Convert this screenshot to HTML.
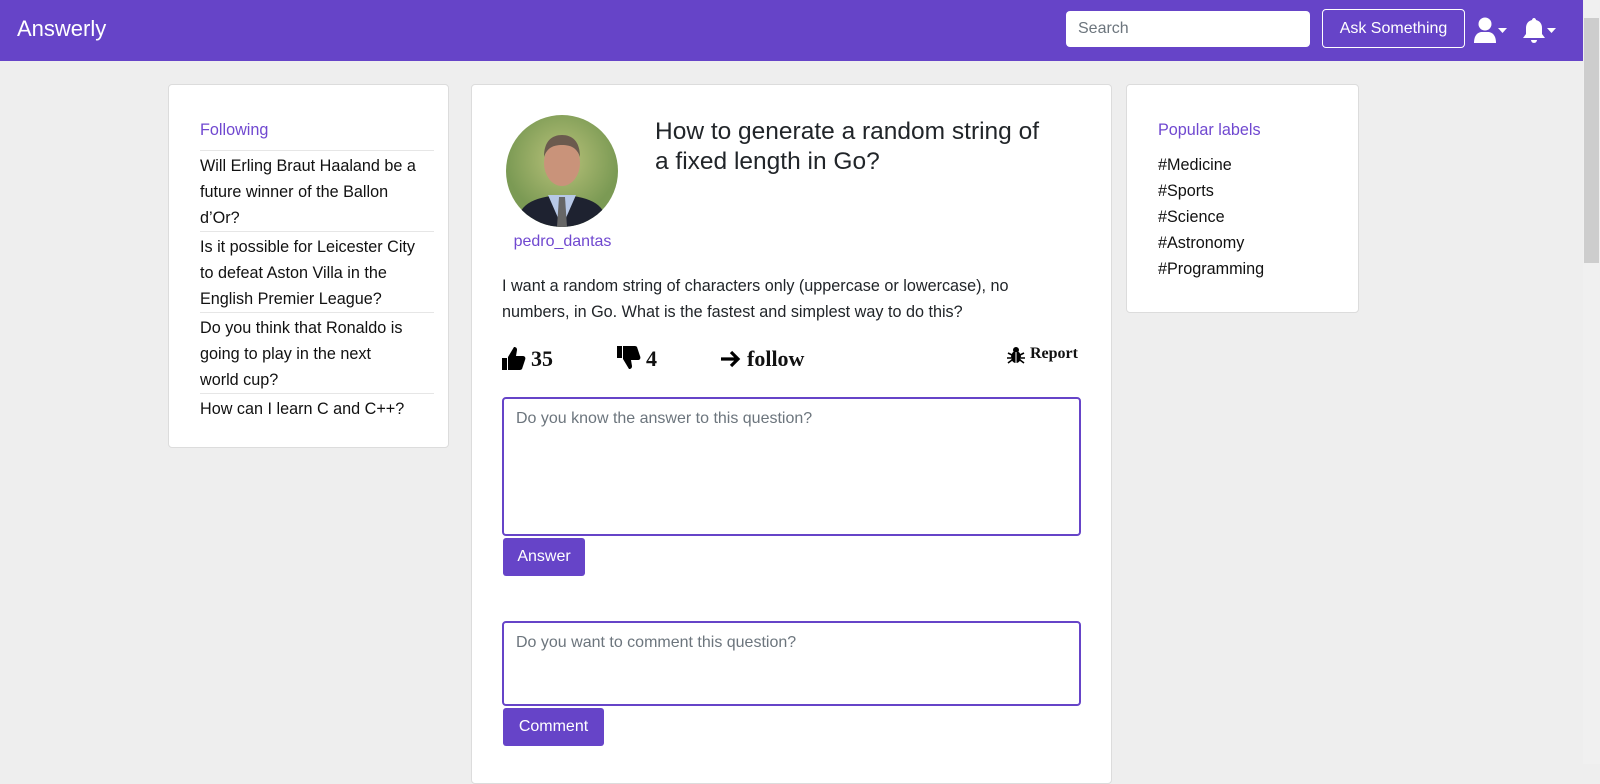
<!DOCTYPE html>
<html><head><meta charset="utf-8"><style>
*{box-sizing:border-box;margin:0;padding:0}
html,body{width:1600px;height:764px;overflow:hidden;background:#eeeeee;font-family:"Liberation Sans",sans-serif;color:#111}
.abs{position:absolute}
.nav{position:absolute;left:0;top:0;width:1583px;height:61px;background:#6644c8}
.brand{left:17px;top:16px;color:#fff;font-size:22px}
.search{left:1066px;top:11px;width:244px;height:36px;background:#fff;border-radius:4px;color:#6c757d;font-size:16px;padding:9px 12px}
.ask{left:1322px;top:9px;width:143px;height:39px;border:1px solid #fff;border-radius:4px;color:#fff;font-size:16px;text-align:center;line-height:37px}
.sb{left:1583px;top:0;width:17px;height:764px;background:#f0f0f0}
.thumb{left:1584px;top:18px;width:15px;height:245px;background:#cdcdcd}
.card{position:absolute;background:#fff;border:1px solid #dcdcdc;border-radius:4px}
.purple{color:#7048d0}
.f16{font-size:16.2px;line-height:26px}
.item{border-top:1px solid #e6e6e6;padding-top:2px;padding-right:6px}
.ta{position:absolute;left:502px;width:579px;border:2px solid #6644c8;border-radius:4px;background:#fff;color:#6c757d;font-size:16px;padding:11px 12px}
.btn{position:absolute;left:503px;background:#6644c8;color:#fff;font-size:16px;border-radius:3px;text-align:center;line-height:38px;height:38px}
.act{font-family:"Liberation Serif",serif;font-weight:bold;font-size:22px}
</style></head><body>
<div class="nav"></div>
<div class="abs brand">Answerly</div>
<div class="abs search">Search</div>
<div class="abs ask">Ask Something</div>
<svg class="abs" style="left:1474px;top:17px" width="34" height="28" viewBox="0 0 34 28"><circle cx="11" cy="7" r="6.5" fill="#fff"/><path d="M0 26c0-8 4-11 8-11h6c4 0 8 3 8 11z" fill="#fff"/><path d="M24 11h9l-4.5 5z" fill="#fff"/></svg>
<svg class="abs" style="left:1523px;top:17px" width="34" height="28" viewBox="0 0 34 28"><path d="M11 1c1 0 2 1 2 2 4 1 6 4 6 8v6l3 4H0l3-4v-6c0-4 2-7 6-8 0-1 1-2 2-2z" fill="#fff"/><path d="M8 23h6a3 3 0 0 1-6 0z" fill="#fff"/><path d="M24 11h9l-4.5 5z" fill="#fff"/></svg>
<div class="abs sb"></div><div class="abs thumb"></div>

<div class="card" style="left:168px;top:84px;width:281px;height:364px"></div>
<div class="abs f16" style="left:200px;top:117px;width:234px">
<div class="purple" style="height:33px">Following</div>
<div class="item">Will Erling Braut Haaland be a future winner of the Ballon d’Or?</div>
<div class="item">Is it possible for Leicester City to defeat Aston Villa in the English Premier League?</div>
<div class="item">Do you think that Ronaldo is going to play in the next<br>world cup?</div>
<div class="item">How can I learn C and C++?</div>
</div>

<div class="card" style="left:471px;top:84px;width:641px;height:700px"></div>
<svg class="abs" style="left:506px;top:115px" width="112" height="112" viewBox="0 0 112 112">
<defs><clipPath id="c"><circle cx="56" cy="56" r="56"/></clipPath><radialGradient id="g" cx="50%" cy="40%"><stop offset="0" stop-color="#b9c27a"/><stop offset="1" stop-color="#7b9a54"/></radialGradient></defs>
<g clip-path="url(#c)"><rect width="112" height="112" fill="url(#g)"/>
<path d="M10 112c2-22 15-30 46-32 31 2 44 10 46 32z" fill="#1e2230"/>
<path d="M42 80l14 32 14-32z" fill="#b7c8e6"/><path d="M53 82h6l2 30h-10z" fill="#666"/>
<ellipse cx="56" cy="48" rx="18" ry="23" fill="#c9937a"/><path d="M38 42c0-16 8-22 18-22s18 6 18 22c-3-9-9-12-18-12s-15 3-18 12z" fill="#6b5a4e"/></g></svg>
<div class="abs purple" style="left:500px;top:229px;width:125px;text-align:center;font-size:16px;line-height:26px">pedro_dantas</div>
<div class="abs" style="left:655px;top:117px;width:402px;font-size:24.5px;line-height:30px;color:#212529">How to generate a random string of a fixed length in Go?</div>
<div class="abs f16" style="left:502px;top:273px;width:540px;color:#212529">I want a random string of characters only (uppercase or lowercase), no numbers, in Go. What is the fastest and simplest way to do this?</div>
<svg class="abs" style="left:502px;top:346px" width="24" height="24" viewBox="0 0 24 24"><rect x="0" y="12" width="5" height="12" fill="#000"/><path d="M6 11l6-10c2 0 3 1 3 3l-1 6h7c2 0 3 2 2 4l-3 9c-1 1-2 1-3 1H6z" fill="#000"/></svg>
<div class="abs act" style="left:531px;top:346px">35</div>
<svg class="abs" style="left:617px;top:346px" width="24" height="24" viewBox="0 0 24 24"><rect x="0" y="0" width="5" height="12" fill="#000"/><path d="M6 13l6 10c2 0 3-1 3-3l-1-6h7c2 0 3-2 2-4l-3-9c-1-1-2-1-3-1H6z" fill="#000"/></svg>
<div class="abs act" style="left:646px;top:346px">4</div>
<svg class="abs" style="left:720px;top:350px" width="22" height="18" viewBox="0 0 22 18"><path d="M1 9h17M11 2l7 7-7 7" stroke="#000" stroke-width="3.2" fill="none"/></svg>
<div class="abs act" style="left:747px;top:346px">follow</div>
<svg class="abs" style="left:1007px;top:346px" width="18" height="18" viewBox="0 0 18 18"><circle cx="9" cy="4" r="3" fill="#000"/><ellipse cx="9" cy="11" rx="5" ry="6" fill="#000"/><path d="M1 7l4 2M17 7l-4 2M0 12h4M18 12h-4M1 17l4-3M17 17l-4-3" stroke="#000" stroke-width="1.6"/><path d="M9 6v11" stroke="#fff" stroke-width="1"/></svg>
<div class="abs" style="left:1030px;top:345px;font-family:'Liberation Serif',serif;font-weight:bold;font-size:16px">Report</div>

<div class="ta" style="top:397px;height:139px">Do you know the answer to this question?</div>
<div class="btn" style="top:538px;width:82px">Answer</div>
<div class="ta" style="top:621px;height:85px">Do you want to comment this question?</div>
<div class="btn" style="top:708px;width:101px">Comment</div>

<div class="card" style="left:1126px;top:84px;width:233px;height:229px"></div>
<div class="abs f16" style="left:1158px;top:117px">
<div class="purple" style="height:35px">Popular labels</div>
<div>#Medicine</div><div>#Sports</div><div>#Science</div><div>#Astronomy</div><div>#Programming</div>
</div>
</body></html>
